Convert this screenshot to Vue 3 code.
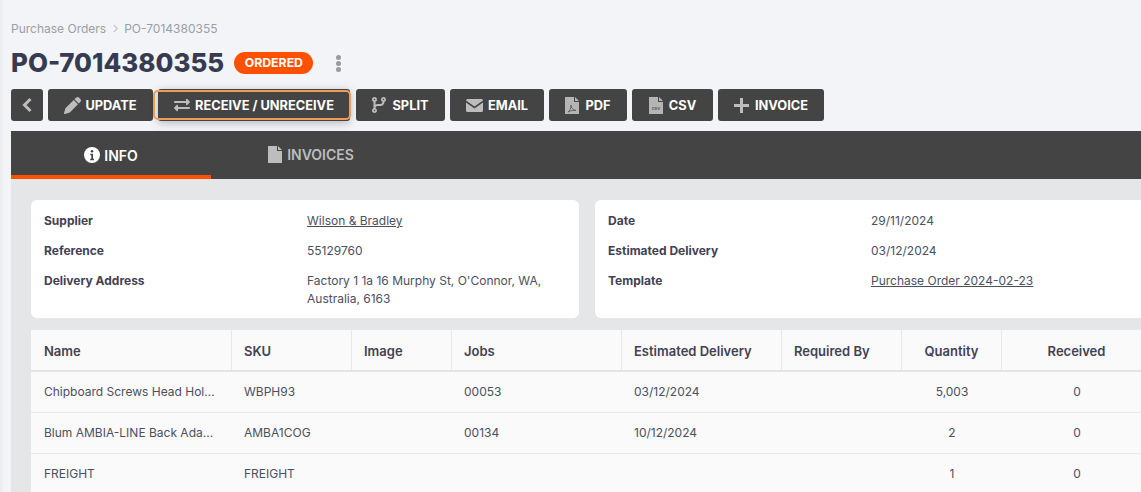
<script setup>
const tabs = [
  { label: 'INFO', icon: 'info', active: true },
  { label: 'INVOICES', icon: 'file', active: false }
]
const left = [
  { k: 'Supplier', v: 'Wilson & Bradley', link: true },
  { k: 'Reference', v: '55129760' },
  { k: 'Delivery Address', v: "Factory 1 1a 16 Murphy St, O'Connor, WA, Australia, 6163" }
]
const right = [
  { k: 'Date', v: '29/11/2024' },
  { k: 'Estimated Delivery', v: '03/12/2024' },
  { k: 'Template', v: 'Purchase Order 2024-02-23', link: true }
]
const cols = [
  { t: 'Name', w: 201 }, { t: 'SKU', w: 120 }, { t: 'Image', w: 100 }, { t: 'Jobs', w: 170 },
  { t: 'Estimated Delivery', w: 160 }, { t: 'Required By', w: 120 },
  { t: 'Quantity', w: 100, c: true }, { t: 'Received', w: 150, c: true }
]
const rows = [
  ['Chipboard Screws Head Hole Drive', 'WBPH93', '', '00053', '03/12/2024', '', '5,003', '0'],
  ['Blum AMBIA-LINE Back Adapter', 'AMBA1COG', '', '00134', '10/12/2024', '', '2', '0'],
  ['FREIGHT', 'FREIGHT', '', '', '', '', '1', '0']
]
</script>

<template>
  <div class="page">
    <div class="crumbs">
      <span>Purchase Orders</span>
      <svg class="sep" viewBox="0 0 8 10" width="7" height="9"><path d="M2 1l4 4-4 4" fill="none" stroke="#c4c6cc" stroke-width="1.4"/></svg>
      <span>PO-7014380355</span>
    </div>
    <div class="title">
      <h1>PO-7014380355</h1>
      <span class="badge">ORDERED</span>
      <span class="kebab"><i></i><i></i><i></i></span>
    </div>
    <div class="actions">
      <button class="btn back">
        <svg viewBox="0 0 12 16" width="12" height="16"><path d="M9.500 2 3.500 8l6 6" fill="none" stroke="#bdbdbd" stroke-width="3"/></svg>
      </button>
      <button class="btn update">
        <svg viewBox="0 0 512 512" width="17" height="17"><path fill="#bdbdbd" d="M362.700 19.300 314.300 67.700 444.300 197.700 492.700 149.300c25-25 25-65.500 0-90.500L453.300 19.300c-25-25-65.500-25-90.600 0zM291.700 90.300 58.600 323.500c-10.400 10.400-18 23.300-22.200 37.400L1 481.200c-2.500 8.500-.2 17.600 6 23.800s15.300 8.500 23.700 6.100l120.300-35.400c14.100-4.200 27-11.800 37.400-22.200L421.700 220.300 291.700 90.300z"/></svg>
        <span>UPDATE</span>
      </button>
      <button class="btn receive">
        <svg viewBox="0 0 512 512" width="16" height="16"><path fill="#bdbdbd" d="M0 168v-16c0-13.255 10.745-24 24-24h360V80c0-21.367 25.899-32.042 40.971-16.971l80 80c9.372 9.373 9.372 24.569 0 33.941l-80 80C409.956 271.982 384 261.456 384 240v-48H24c-13.255 0-24-10.745-24-24zm488 152H128v-48c0-21.314-25.862-32.080-40.971-16.971l-80 80c-9.372 9.373-9.372 24.569 0 33.941l80 80C102.057 463.997 128 453.437 128 432v-48h360c13.255 0 24-10.745 24-24v-16c0-13.255-10.745-24-24-24z"/></svg>
        <span>RECEIVE / UNRECEIVE</span>
      </button>
      <button class="btn split">
        <svg viewBox="0 0 448 512" width="14" height="16"><path fill="#bdbdbd" d="M80 104a24 24 0 1 0 0-48 24 24 0 1 0 0 48zm80-24c0 32.800-19.700 61-48 73.300v87.800c18.800-10.900 40.700-17.100 64-17.100h96c35.300 0 64-28.700 64-64v-6.700C307.700 141 288 112.800 288 80c0-44.200 35.800-80 80-80s80 35.800 80 80c0 32.800-19.700 61-48 73.300V160c0 70.700-57.300 128-128 128H176c-35.300 0-64 28.700-64 64v6.700c28.300 12.300 48 40.500 48 73.300c0 44.200-35.800 80-80 80s-80-35.800-80-80c0-32.800 19.700-61 48-73.300V353.700 153.300C19.700 141 0 112.800 0 80C0 35.800 35.800 0 80 0s80 35.800 80 80zm232 0a24 24 0 1 0-48 0 24 24 0 1 0 48 0zM80 456a24 24 0 1 0 0-48 24 24 0 1 0 0 48z"/></svg>
        <span>SPLIT</span>
      </button>
      <button class="btn email">
        <svg viewBox="0 0 17 13" width="17" height="13"><path fill="#bdbdbd" d="M0 1.500A1.500 1.500 0 0 1 1.500 0h14A1.500 1.500 0 0 1 17 1.500L8.500 7.500zM0 3.500V11.500A1.500 1.500 0 0 0 1.500 13h14a1.500 1.500 0 0 0 1.500-1.500V3.500L8.500 9.500z"/></svg>
        <span>EMAIL</span>
      </button>
      <button class="btn pdf">
        <svg viewBox="0 0 14 17" width="14" height="17"><path fill="#b5b5b5" d="M0 0h9v5h5v12H0z"/><path fill="#b5b5b5" d="M10 0l4 4h-4z"/><path fill="none" stroke="#555" stroke-width=".8" d="M3 15c2-1 3-4 3-7 0 3 2 5 5 5.500-3-.2-6 .2-8 1.500z"/></svg>
        <span>PDF</span>
      </button>
      <button class="btn csv">
        <svg viewBox="0 0 14 17" width="14" height="17"><path fill="#b5b5b5" d="M0 0h9v5h5v12H0z"/><path fill="#b5b5b5" d="M10 0l4 4h-4z"/><text x="7" y="13" text-anchor="middle" font-size="5" font-family="Inter, sans-serif" font-weight="600" fill="#555">csv</text></svg>
        <span>CSV</span>
      </button>
      <button class="btn invoice">
        <svg viewBox="0 0 15 15" width="15" height="15"><path fill="#bdbdbd" d="M6 0h3v6h6v3H9v6H6V9H0V6h6z"/></svg>
        <span>INVOICE</span>
      </button>
    </div>
    <div class="tabs">
      <div v-for="t in tabs" :key="t.label" class="tab" :class="{ active: t.active }">
        <svg v-if="t.icon === 'info'" viewBox="0 0 16 16" width="16" height="16"><circle cx="8" cy="8" r="8" fill="#fff"/><circle cx="8" cy="4.300" r="1.300" fill="#444"/><path fill="#444" d="M6.300 6.800h2.700v5h1v1.400H6.200v-1.400h1.100V8.200h-1z"/></svg>
        <svg v-else viewBox="0 0 14 17" width="14" height="17"><path fill="#bdbdbd" d="M0 0h9v5h5v12H0z"/><path fill="#bdbdbd" d="M10 0l4 4h-4z"/></svg>
        <span>{{ t.label }}</span>
      </div>
    </div>
    <div class="content">
      <div class="cards">
        <section class="card first">
          <div v-for="r in left" :key="r.k" class="line">
            <b>{{ r.k }}</b>
            <span :class="{ link: r.link }">{{ r.v }}</span>
          </div>
        </section>
        <section class="card second">
          <div v-for="r in right" :key="r.k" class="line">
            <b>{{ r.k }}</b>
            <span :class="{ link: r.link }">{{ r.v }}</span>
          </div>
        </section>
      </div>
      <div class="table">
        <div class="row head">
          <div v-for="c in cols" :key="c.t" class="cell" :class="{ center: c.c }" :style="{ width: c.w + 'px' }">{{ c.t }}</div>
        </div>
        <div v-for="(r, i) in rows" :key="i" class="row body">
          <div v-for="(v, j) in r" :key="j" class="cell" :class="{ center: cols[j].c }" :style="{ width: cols[j].w + 'px' }">
            <span class="clip">{{ v }}</span>
          </div>
        </div>
      </div>
    </div>
  </div>
</template>

<style>
html, body { margin: 0; background: #f2f4f8; overflow: hidden; }
</style>

<style scoped>
.page {
  width: 1141px; height: 492px; overflow: hidden; box-sizing: border-box;
  padding: 0 0 0 11px; background: linear-gradient(90deg, #ebecf0, #f2f4f8 4px);
  font-family: Inter, "Liberation Sans", sans-serif; color: #3f4254;
}
.crumbs {
  display: flex; align-items: center; gap: 5.500px; height: 18px; margin-top: 19px;
  font-size: 12px; color: #9d9da6;
}
.title { display: flex; align-items: center; height: 36px; margin-top: 8px; }
h1 { margin: 0; font-size: 25.900px; font-weight: 800; color: #363b51; line-height: 36px; letter-spacing: 0; }
.badge {
  margin-left: 10px; height: 22px; line-height: 22px; padding: 0 10.500px; border-radius: 11px;
  background: #ff5000; color: #fff; font-size: 12.300px; font-weight: 700;
}
.kebab { display: flex; flex-direction: column; gap: 1px; margin-left: 23px; }
.kebab i { width: 5px; height: 5px; border-radius: 50%; background: #9a9a9a; }
.actions { display: flex; gap: 5px; margin-top: 8px; height: 32px; }
.btn {
  display: flex; align-items: center; justify-content: center; gap: 5px;
  height: 32px; padding: 0; border: 0; border-radius: 3px; background: #444;
  color: #fff; font-family: inherit; font-size: 12.800px; font-weight: 700;
}
.back { width: 32px; }
.update { width: 105px; gap: 4px; }
.receive {
  width: 192px; margin-right: 1px; position: relative;
  box-shadow: 0 2px 8px rgba(0,0,0,.25);
}
.receive::after {
  content: ""; position: absolute; inset: 1px -1px 1px -5px;
  border: 2px solid #ee9c58; border-radius: 5px; pointer-events: none;
}
.split { width: 89px; gap: 6px; }
.email { width: 94px; }
.pdf { width: 78px; gap: 6px; }
.csv { width: 81px; gap: 6px; }
.invoice { width: 106px; gap: 6px; }
.tabs { display: flex; height: 48px; margin-top: 10px; background: #444; }
.tab {
  width: 200px; height: 48px; box-sizing: border-box; display: flex; align-items: center; justify-content: center;
  gap: 5px; color: #bdbdbd; font-size: 14px; font-weight: 600; padding-bottom: 1px;
}
.tab.active { color: #fff; border-bottom: 4px solid #ff5000; padding: 4px 0 0; gap: 4px; }
.content {
  background: #e5e6e8; padding: 21px 0 0 20px; height: 400px; box-sizing: border-box;
}
.cards { display: flex; gap: 16px; width: 1200px; }
.card {
  background: #fff; border-radius: 6px; box-sizing: border-box; height: 118px; padding: 6px 13px 0;
  font-size: 12px;
}
.first { width: 548px; }
.second { width: 600px; }
.line { display: flex; padding: 6px 0; line-height: 18px; }
.line b { font-weight: 700; color: #3f4254; flex: none; width: 263px; }
.line span { color: #4b4f5f; flex: none; }
.first .line span { width: 252px; }
.link { text-decoration: underline; }
.table { margin-top: 12px; width: 1122px; background: #fafafa; font-size: 12px; }
.row { display: flex; }
.head { height: 42px; box-sizing: border-box; border-bottom: 2px solid #e4e4e4; font-weight: 600; font-size: 13px; color: #3f4254; }
.head .cell { border-right: 1px solid #e8e8e8; padding-top: 1px; }
.body { height: 41px; box-sizing: border-box; border-bottom: 1px solid #e8e8e8; color: #4b4f5f; }
.body .cell { padding-bottom: 1px; }
.cell {
  flex: none; box-sizing: border-box; display: flex; align-items: center; padding: 0 12px;
}
.cell:first-child { padding-left: 13px; }
.center { justify-content: center; }
.clip { display: block; max-width: 100%; overflow: hidden; white-space: nowrap; text-overflow: ellipsis; }
</style>
